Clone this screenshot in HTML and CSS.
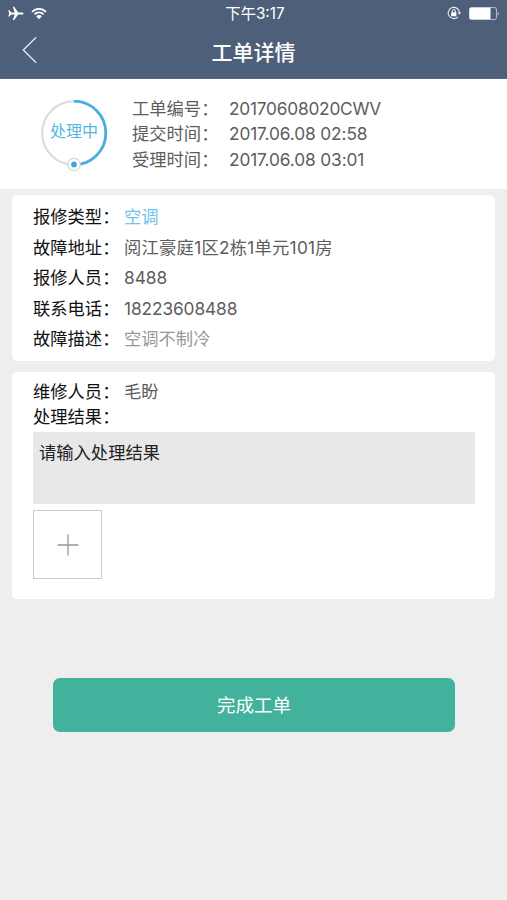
FILE: index.html
```html
<!DOCTYPE html>
<html lang="zh-CN">
<head>
<meta charset="utf-8">
<title>工单详情</title>
<link rel="stylesheet" href="styles.css">
</head>
<body>
<header class="header">
  <div class="status-bar">
    <div class="status-left">
      <svg width="16" height="15" viewBox="0 0 16 15"><path d="M15.5 7.4C15.5 6.7 14.7 6.4 13.8 6.4H10.2L6.2.8H4.8L6.7 6.4H3.2L1.5 4.3H.3L1.2 7.4.3 10.5H1.5L3.2 8.4H6.7L4.8 14H6.2L10.2 8.4H13.8C14.7 8.4 15.5 8.1 15.5 7.4Z" fill="#fff"/></svg>
      <svg width="16" height="13" viewBox="0 0 16 13"><g fill="none" stroke="#fff" stroke-width="1.7"><path d="M1 4.9C4.9.8 11.1.8 15 4.9"/><path d="M3.4 7.4C6 4.8 10 4.8 12.6 7.4"/></g><path d="M5.2 9.2C6.8 7.7 9.2 7.7 10.8 9.2L8 12.2Z" fill="#fff"/></svg>
    </div>
    <div class="clock">下午3:17</div>
    <div class="status-right">
      <svg width="15" height="14" viewBox="0 0 15 14"><path d="M12.4 7A5.6 5.6 0 1 0 10.8 10.9" fill="none" stroke="#e4edf5" stroke-width="1.1"/><path d="M10.6 6.4H14.2L12.4 8.7Z" fill="#e4edf5"/><rect x="4.2" y="6.3" width="5.2" height="4" rx=".5" fill="#fff"/><path d="M5.2 6.5V5.2a1.6 1.6 0 0 1 3.2 0V6.5" fill="none" stroke="#fff"/></svg>
      <svg width="31" height="13" viewBox="0 0 31 13"><rect x=".5" y=".5" width="27" height="12" rx="2" fill="none" stroke="#b5c0cf"/><path d="M2 .8H21.5V12.2H2a1.5 1.5 0 0 1-1.5-1.5V2.3A1.5 1.5 0 0 1 2 .8Z" fill="#fff"/><path d="M28.8 4.2q1.8 2.3 0 4.6Z" fill="#dfe6ee"/></svg>
    </div>
  </div>
  <nav class="nav">
    <svg class="back" width="16" height="28" viewBox="0 0 16 28"><path d="M14.2 1.3 1.3 14 14.2 26.7" fill="none" stroke="#dbe7f2" stroke-width="1.4"/></svg>
    <h1 class="title">工单详情</h1>
  </nav>
</header>
<main>
  <section class="summary">
    <div class="progress">
      <svg width="68" height="74" viewBox="0 0 68 74"><circle cx="33" cy="33" r="31.8" fill="none" stroke="#dadada" stroke-width="2"/><path d="M33 1.2A31.8 31.8 0 0 1 33 64.8" fill="none" stroke="#4aade0" stroke-width="2.8"/><circle cx="33" cy="64.5" r="6.2" fill="#fff" stroke="#d2d7da" stroke-width="1.2"/><circle cx="33" cy="64.5" r="2.9" fill="#40a6dc"/></svg>
      <span class="progress-text">处理中</span>
    </div>
    <dl class="meta">
      <dt>工单编号：</dt><dd class="number">20170608020CWV</dd>
      <dt>提交时间：</dt><dd class="date">2017.06.08 02:58</dd>
      <dt>受理时间：</dt><dd class="date">2017.06.08 03:01</dd>
    </dl>
  </section>
  <section class="card">
    <dl class="fields">
      <dt>报修类型：</dt><dd class="type">空调</dd>
      <dt>故障地址：</dt><dd class="address">阅江豪庭1区2栋1单元101房</dd>
      <dt>报修人员：</dt><dd>8488</dd>
      <dt>联系电话：</dt><dd class="phone">18223608488</dd>
      <dt>故障描述：</dt><dd class="muted">空调不制冷</dd>
    </dl>
  </section>
  <section class="card result">
    <dl class="fields compact">
      <dt>维修人员：</dt><dd>毛盼</dd>
      <dt>处理结果：</dt><dd></dd>
    </dl>
    <div class="note">请输入处理结果</div>
    <div class="upload"><svg width="22" height="22" viewBox="0 0 22 22"><path d="M11 .5V21.5M.5 11H21.5" stroke="#999" stroke-width="1.3"/></svg></div>
  </section>
  <button class="submit">完成工单</button>
</main>
</body>
</html>
```
FILE: styles.css
```css
* { box-sizing: border-box; }
body {
  margin: 0;
  min-height: 900px;
  background: #eee;
  color: #5d5d5d;
  font: 17.3px/25px Inter, "Noto Sans CJK SC", sans-serif;
}
svg { display: block; flex: none; }
dl, dd, h1 { margin: 0; }
.header {
  height: 79px;
  background: #4e6079;
  border-bottom: 1px solid #5b6785;
  color: #fff;
}
.status-bar {
  display: grid;
  grid-template-columns: 1fr auto 1fr;
  align-items: center;
  height: 26px;
  padding: 0 7px 0 8px;
}
.status-left, .status-right { display: flex; align-items: center; gap: 7px; }
.status-right { justify-content: flex-end; }
.clock { font-size: 15.3px; line-height: 20px; padding: 1px 0 0 2px; }
.nav {
  display: grid;
  grid-template-columns: 40px 1fr 40px;
  align-items: center;
  height: 48px;
}
.back { margin-left: 22px; }
.title { font-size: 21px; line-height: 30px; font-weight: 500; text-align: center; padding-top: 6px; }
.summary {
  display: flex;
  height: 110px;
  padding: 17px 0 0 41px;
  background: #fff;
}
.progress { display: grid; width: 91px; margin-top: 4px; }
.progress svg, .progress-text { grid-area: 1 / 1; }
.progress-text {
  width: 66px;
  margin-top: 20px;
  font-size: 16px;
  line-height: 22px;
  text-align: center;
  color: #55b6e6;
}
.meta {
  display: grid;
  grid-template-columns: 97px auto;
  grid-auto-rows: 25.3px;
  align-content: start;
}
.number { letter-spacing: -.22px; }
.date { letter-spacing: -.12px; }
.meta dt, .fields dt { white-space: nowrap; }
.card {
  margin: 6px 12px 0;
  height: 166px;
  padding: 7px 20px 0 21px;
  border-radius: 5px;
  background: #fff;
}
.fields {
  display: grid;
  grid-template-columns: 91px auto;
  grid-auto-rows: 30.5px;
  line-height: 30.5px;
}
.fields dt { color: #111; }
.fields .type { color: #72c3ec; }
.fields .muted { color: #999; }
.address { letter-spacing: .25px; }
.phone { letter-spacing: -.1px; }
.result { height: 227px; margin-top: 10.5px; }
.compact { grid-auto-rows: 25.5px; line-height: 25.5px; }
.note {
  height: 72px;
  margin-top: 2.5px;
  padding: 8px 6px;
  background: #e8e8e8;
  color: #222;
}
.upload {
  display: grid;
  place-items: center;
  width: 69px;
  height: 69px;
  margin-top: 6px;
  border: 1px solid #c8c8c8;
}
.submit {
  display: block;
  width: 402px;
  height: 54px;
  margin: 79.5px 0 0 53px;
  padding: 0;
  border: 0;
  border-radius: 7px;
  background: #42b29c;
  color: #fff;
  font: 18.5px/26px Inter, "Noto Sans CJK SC", sans-serif;
}
```
